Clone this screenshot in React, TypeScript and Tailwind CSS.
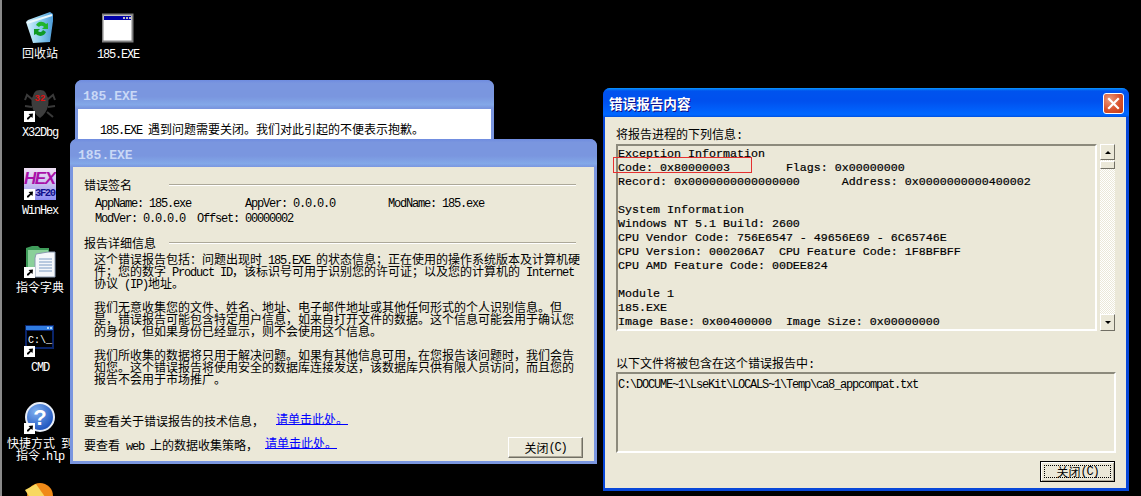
import React from "react";

const CJK = "inline-block leading-3 font-['Noto_Sans_CJK_SC','Noto_Sans_CJK_JP',sans-serif] text-[12px]";
const LATIN = "inline-block leading-3 font-['Liberation_Mono','DejaVu_Sans_Mono',monospace] text-[12px] tracking-[-1.2px]";

// SimSun look: latin is half the width of the CJK glyphs
const Txt = ({ children }: { children: string }) => {
  const runs = children.match(/[\x20-\x7e]+|[^\x20-\x7e]+/g) || [];
  return (
    <>
      {runs.map((r, i) => (
        <span key={i} className={/^[\x20-\x7e]/.test(r) ? LATIN : CJK}>
          {r}
        </span>
      ))}
    </>
  );
};

const Line = ({ children, className = "" }: { children?: string; className?: string }) => (
  <div className={`h-3 leading-3 whitespace-pre text-black ${className}`}>
    <Txt>{children || " "}</Txt>
  </div>
);

const GroupHead = ({ label }: { label: string }) => (
  <div className="flex h-3 items-center mr-[7px]">
    <div className="w-[85px] h-3 -mt-[2px] leading-3 text-black whitespace-pre">
      <Txt>{label}</Txt>
    </div>
    <div className="flex-1 h-[2px] border-t border-t-[#aca899] border-b border-b-white" />
  </div>
);

const Shortcut = () => (
  <g>
    <rect x="0" y="21" width="11" height="11" fill="#fff" />
    <path d="M3 29.5 L3 28 L6 25.5 L4.5 24 L9 23.5 L8.5 28 L7 26.8 L4.5 29.5 Z" fill="#000" />
  </g>
);

const RecycleIcon = () => (
  <svg width="32" height="32" viewBox="0 0 32 32">
    <defs>
      <linearGradient id="bin" x1="0" y1="0" x2="1" y2="0">
        <stop offset="0" stopColor="#d6f1fb" />
        <stop offset="0.5" stopColor="#8fd0f0" />
        <stop offset="1" stopColor="#4d9bd8" />
      </linearGradient>
    </defs>
    <path d="M2 10 L4 8 L26 0 L29 2 L29 9 L26 30 L9 31 Z" fill="url(#bin)" />
    <path d="M3 11 L28 3" stroke="#eaf8fd" strokeWidth="2" />
    <path d="M12 13 a6 6 0 0 1 10 -1 l2 -1 v6 h-6 l2 -2 a3 3 0 0 0 -5 0 Z" fill="#21b52c" />
    <path d="M22 20 a6 6 0 0 1 -10 2 l-2 1 v-6 h6 l-2 2 a3 3 0 0 0 5 -1 Z" fill="#0f9a25" />
  </svg>
);

const WindowIcon = () => (
  <svg width="32" height="32" viewBox="0 0 32 32">
    <rect x="0.5" y="2.5" width="30" height="27" fill="#fff" stroke="#808080" strokeWidth="2" />
    <rect x="2" y="4" width="27" height="4" fill="#0000a8" />
    <rect x="21" y="5" width="2" height="2" fill="#c0c0c0" />
    <rect x="24" y="5" width="2" height="2" fill="#c0c0c0" />
    <rect x="27" y="5" width="2" height="2" fill="#c0c0c0" />
  </svg>
);

const BugIcon = () => (
  <svg width="32" height="32" viewBox="0 0 32 32">
    <g stroke="#3a3a3a" strokeWidth="2" fill="none">
      <path d="M9 10 L3 5 L1 10" />
      <path d="M8 17 L1 16" />
      <path d="M9 22 L3 27" />
      <path d="M23 10 L29 5 L31 10" />
      <path d="M24 17 L31 16" />
      <path d="M23 22 L29 27" />
    </g>
    <path d="M16 0 C21 0 22 3 23 6 C26 10 25 22 16 28 C7 22 6 10 9 6 C10 3 11 0 16 0 Z" fill="#3d3d3d" />
    <text x="16" y="11" textAnchor="middle" fill="#e01010" className="font-['Liberation_Mono'] text-[9px] font-bold">
      32
    </text>
    <Shortcut />
  </svg>
);

const HexIcon = () => (
  <svg width="32" height="32" viewBox="0 0 32 32">
    <defs>
      <linearGradient id="hexbg" x1="0" y1="0" x2="0" y2="1">
        <stop offset="0" stopColor="#f0e0f4" />
        <stop offset="0.5" stopColor="#c8c0f0" />
        <stop offset="1" stopColor="#8c8cf4" />
      </linearGradient>
    </defs>
    <rect width="32" height="32" fill="url(#hexbg)" />
    <text x="0" y="16" textLength="32" fill="#a810a8" className="font-['Liberation_Sans'] text-[17px] font-bold italic">
      HEX
    </text>
    <text x="11" y="28" textLength="21" fill="#10108c" className="font-['Liberation_Mono'] text-[10.5px] font-bold">
      3F20
    </text>
    <Shortcut />
  </svg>
);

const DictIcon = () => (
  <svg width="32" height="32" viewBox="0 0 32 32">
    <path d="M2 2 L8 0 L14 0 L16 2 L25 2 L25 24 L2 24 Z" fill="#3f9c5a" />
    <path d="M4 4 H24 V22 H4 Z" fill="#8ad09a" />
    <path d="M12 8 L24 6 L31 6 L31 31 L11 31 L11 12 Z" fill="#f4f7fb" stroke="#8a9ab0" />
    <g stroke="#7d9cc4">
      <path d="M15 13 H28" />
      <path d="M15 16 H28" />
      <path d="M15 19 H28" />
      <path d="M15 22 H28" />
      <path d="M15 25 H28" />
    </g>
    <Shortcut />
  </svg>
);

const CmdIcon = () => (
  <svg width="32" height="32" viewBox="0 0 32 32">
    <rect x="1" y="0" width="29" height="24" fill="#0a246a" />
    <rect x="2" y="1" width="27" height="4" fill="#2f7be0" />
    <rect x="23" y="2" width="2" height="2" fill="#a8d0f8" />
    <rect x="26" y="2" width="2" height="2" fill="#a8d0f8" />
    <rect x="3" y="6" width="25" height="16" fill="#000" />
    <text x="4" y="18" fill="#fff" className="font-['Liberation_Mono'] text-[10px]">
      C:\_
    </text>
    <Shortcut />
  </svg>
);

const HelpIcon = () => (
  <svg width="32" height="32" viewBox="0 0 32 32">
    <defs>
      <radialGradient id="hlp" cx="0.35" cy="0.3" r="0.8">
        <stop offset="0" stopColor="#7fb0f0" />
        <stop offset="1" stopColor="#1248b8" />
      </radialGradient>
    </defs>
    <circle cx="16" cy="15" r="14" fill="url(#hlp)" stroke="#e8eef8" strokeWidth="2" />
    <text x="16" y="23" textAnchor="middle" fill="#fff" className="font-['Liberation_Sans'] text-[22px] font-bold">
      ?
    </text>
    <Shortcut />
  </svg>
);

const OrangeIcon = () => (
  <svg width="32" height="32" viewBox="0 0 32 32">
    <circle cx="16" cy="14" r="13" fill="#f08a18" />
    <path d="M1 8 L12 2 L26 22 L14 28 Z" fill="#f8d860" />
  </svg>
);

const DeskIcon = ({
  pos,
  icon,
  label,
  label2,
}: {
  pos: string;
  icon: React.ReactNode;
  label?: string;
  label2?: string;
}) => (
  <div className={`absolute w-[76px] flex flex-col items-center ${pos}`}>
    <div className="w-8 h-8">{icon}</div>
    <div className="mt-[2px] h-3 leading-3 whitespace-pre text-white">{label && <Txt>{label}</Txt>}</div>
    {label2 && (
      <div className="h-3 leading-3 whitespace-pre text-white">
        <Txt>{label2}</Txt>
      </div>
    )}
  </div>
);

const InactiveTitle = () => (
  <div className="h-[28px] rounded-t-[7px] pl-[8px] pt-[5px] flex items-center bg-[linear-gradient(180deg,#6f8ce0_0%,#7a96df_12%,#7a96df_60%,#83a8e8_88%,#7a96df_100%)] font-['Liberation_Mono'] text-[13px] font-bold text-[#c9d8f6]">
    185.EXE
  </div>
);

const XpButton = () => (
  <div className="w-[75px] h-[21px] flex items-center justify-center border border-t-white border-l-white border-r-[#716f64] border-b-[#716f64] shadow-[inset_-1px_-1px_0_#aca899] whitespace-pre text-black">
    <Txt>关闭(C)</Txt>
  </div>
);

const FocusButton = () => (
  <div className="w-[75px] h-[21px] p-[3px] border border-black shadow-[inset_1px_1px_0_#fff,inset_-1px_-1px_0_#aca899] text-black">
    <div className="w-full h-full flex items-center justify-center border border-dotted border-black whitespace-pre">
      <Txt>关闭(C)</Txt>
    </div>
  </div>
);

const reportLines = [
  "Exception Information",
  "Code: 0x80000003        Flags: 0x00000000",
  "Record: 0x0000000000000000      Address: 0x0000000000400002",
  " ",
  "System Information",
  "Windows NT 5.1 Build: 2600",
  "CPU Vendor Code: 756E6547 - 49656E69 - 6C65746E",
  "CPU Version: 000206A7  CPU Feature Code: 1F8BFBFF",
  "CPU AMD Feature Code: 00DEE824",
  " ",
  "Module 1",
  "185.EXE",
  "Image Base: 0x00400000  Image Size: 0x00000000",
];

const sunken = "border-2 border-t-[#8c8a7c] border-l-[#8c8a7c] border-r-white border-b-white";

export default function App() {
  return (
    <div className="relative w-[1141px] h-[496px] bg-black overflow-hidden border-l-2 border-l-[#8a8a8a] box-border">
      <DeskIcon pos="left-[0px] top-[12px]" icon={<RecycleIcon />} label="回收站" />
      <DeskIcon pos="left-[78px] top-[12px]" icon={<WindowIcon />} label="185.EXE" />
      <DeskIcon pos="left-[0px] top-[90px]" icon={<BugIcon />} label="X32Dbg" />
      <DeskIcon pos="left-[0px] top-[168px]" icon={<HexIcon />} label="WinHex" />
      <DeskIcon pos="left-[0px] top-[246px]" icon={<DictIcon />} label="指令字典" />
      <DeskIcon pos="left-[0px] top-[325px]" icon={<CmdIcon />} label="CMD" />
      <DeskIcon pos="left-[0px] top-[402px]" icon={<HelpIcon />} label="快捷方式 到" label2="指令.hlp" />
      <DeskIcon pos="left-[0px] top-[482px]" icon={<OrangeIcon />} />

      {/* window behind */}
      <div className="absolute left-[73px] top-[80px] w-[419px] h-[80px] bg-[#7a96df] rounded-t-[7px]">
        <InactiveTitle />
        <div className="mx-[3px] h-[52px] bg-white pl-[22px] pt-[13px] mt-[1px]">
          <Line>185.EXE 遇到问题需要关闭。我们对此引起的不便表示抱歉。</Line>
        </div>
      </div>

      {/* error signature window */}
      <div className="absolute left-[68px] top-[139px] w-[527px] h-[325px] bg-[#7a96df] rounded-t-[7px]">
        <InactiveTitle />
        <div className="mx-[3px] h-[294px] bg-[#ebe8d8] pl-[11px] pr-[11px] pt-[12px] flex flex-col">
          <GroupHead label="错误签名" />
          <div className="flex pl-[11px] mt-[4px] h-3">
            <Line className="w-[150px]">AppName: 185.exe</Line>
            <Line className="w-[143px]">AppVer: 0.0.0.0</Line>
            <Line>ModName: 185.exe</Line>
          </div>
          <Line className="pl-[11px] mt-[3px]">ModVer: 0.0.0.0  Offset: 00000002</Line>
          <div className="mt-[15px]">
            <GroupHead label="报告详细信息" />
          </div>
          <div className="pl-[10px] mt-[3px]">
            <Line>这个错误报告包括：问题出现时 185.EXE 的状态信息；正在使用的操作系统版本及计算机硬</Line>
            <Line>件；您的数字 Product ID，该标识号可用于识别您的许可证；以及您的计算机的 Internet</Line>
            <Line>协议 (IP)地址。</Line>
            <Line />
            <Line>我们无意收集您的文件、姓名、地址、电子邮件地址或其他任何形式的个人识别信息。但</Line>
            <Line>是，错误报告可能包含特定用户信息，如来自打开文件的数据。这个信息可能会用于确认您</Line>
            <Line>的身份，但如果身份已经显示，则不会使用这个信息。</Line>
            <Line />
            <Line>我们所收集的数据将只用于解决问题。如果有其他信息可用，在您报告该问题时，我们会告</Line>
            <Line>知您。这个错误报告将使用安全的数据库连接发送，该数据库只供有限人员访问，而且您的</Line>
            <Line>报告不会用于市场推广。</Line>
          </div>
          <div className="flex justify-between items-end mt-auto pb-[3px]">
            <div className="flex flex-col gap-3 pb-[8px]">
              <div className="flex h-3">
                <Line className="w-[192px]">要查看关于错误报告的技术信息，</Line>
                <div className="-mt-0.5 h-[13px] leading-3 text-[#0000ff] border-b border-b-[#0000ff]">
                  <Txt>请单击此处。</Txt>
                </div>
              </div>
              <div className="flex h-3">
                <Line className="w-[181px]">要查看 web 上的数据收集策略，</Line>
                <div className="-mt-0.5 h-[13px] leading-3 text-[#0000ff] border-b border-b-[#0000ff]">
                  <Txt>请单击此处。</Txt>
                </div>
              </div>
            </div>
            <XpButton />
          </div>
        </div>
      </div>

      {/* report contents window */}
      <div className="absolute left-[601px] top-[88px] w-[526px] h-[403px] bg-[#0847d8] rounded-t-[7px]">
        <div className="h-[29px] rounded-t-[7px] pl-[6px] pr-[5px] pt-[5px] flex justify-between items-start bg-[linear-gradient(180deg,#0997ff_0%,#0053ee_10%,#0050ee_45%,#0066ff_88%,#0066ff_93%,#0050dd_100%)]">
          <div className="h-[21px] leading-[21px] font-['Noto_Sans_CJK_SC',sans-serif] text-[13.6px] font-bold text-white [text-shadow:1px_1px_0_#0f1089]">
            错误报告内容
          </div>
          <div className="w-[21px] h-[21px] rounded-[3px] border border-white bg-[radial-gradient(circle_at_30%_30%,#ec9a7c,#d8512c_55%,#c23a14)] flex items-center justify-center">
            <svg width="13" height="13" viewBox="0 0 13 13">
              <path d="M2 2 L11 11 M11 2 L2 11" stroke="#fff" strokeWidth="2.2" strokeLinecap="square" />
            </svg>
          </div>
        </div>
        <div className="ml-[2px] mr-[3px] h-[371px] bg-[#ebe8d8] pl-[11px] pt-[10px] flex flex-col">
          <Line>将报告进程的下列信息:</Line>
          <div className="flex mt-[5px] h-[187px]">
            <div className={`relative w-[481px] pt-px overflow-visible ${sunken}`}>
              {reportLines.map((l, i) => (
                <div
                  key={i}
                  className="h-[14px] leading-[14px] whitespace-pre font-['Liberation_Mono',monospace] text-[11.67px] text-black [-webkit-text-stroke:0.2px_#000]"
                >
                  {l}
                </div>
              ))}
              <div className="absolute -left-[5px] top-[11px] w-[139px] h-[16px] border border-[#e53030]" />
            </div>
            <div className="ml-[3px] w-[15px] flex flex-col bg-[repeating-conic-gradient(#ffffff_0_25%,#ebe8d8_0_50%)] bg-[length:2px_2px]">
              <div className="h-[16px] bg-[#ebe8d8] border border-t-white border-l-white border-r-[#716f64] border-b-[#716f64] flex items-center justify-center">
                <div className="w-0 h-0 border-x-[3px] border-x-transparent border-b-[3px] border-b-black" />
              </div>
              <div className="h-[8px] mt-px bg-[#ebe8d8] border border-t-white border-l-white border-r-[#716f64] border-b-[#716f64]" />
              <div className="flex-1" />
              <div className="h-[17px] bg-[#ebe8d8] border border-t-white border-l-white border-r-[#716f64] border-b-[#716f64] flex items-center justify-center">
                <div className="w-0 h-0 border-x-[3px] border-x-transparent border-t-[3px] border-t-black" />
              </div>
            </div>
          </div>
          <Line className="mt-[25px]">以下文件将被包含在这个错误报告中:</Line>
          <div className={`mt-[4px] w-[500px] h-[81px] pt-[2px] ${sunken}`}>
            <Line>{"C:\\DOCUME~1\\LseKit\\LOCALS~1\\Temp\\ca8_appcompat.txt"}</Line>
          </div>
          <div className="flex justify-end mt-[8px] pr-[11px]">
            <FocusButton />
          </div>
        </div>
      </div>
    </div>
  );
}
